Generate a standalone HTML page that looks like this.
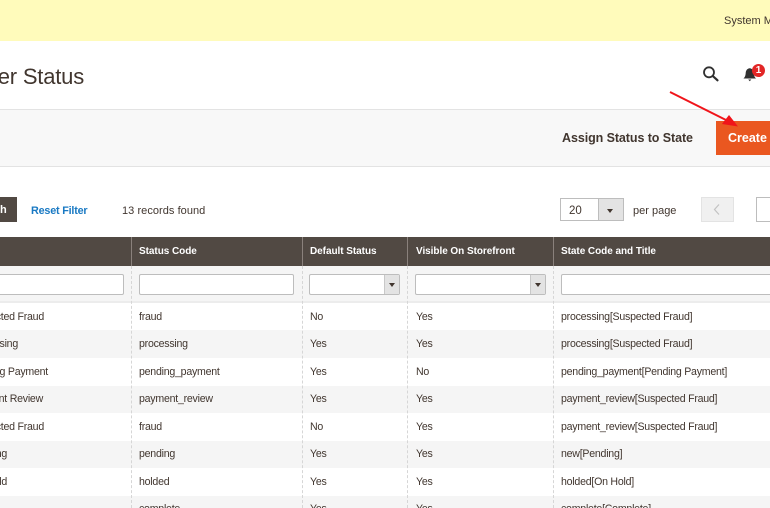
<!DOCTYPE html>
<html><head><meta charset="utf-8">
<style>
html,body{margin:0;padding:0;background:#fff}
#p{position:relative;width:770px;height:508px;overflow:hidden;background:#fff;font-family:"Liberation Sans",sans-serif;color:#41362f;font-size:11px}
#p div{position:absolute;white-space:nowrap}
.t{line-height:16px;margin-top:1px;font-size:10.6px;letter-spacing:-.24px}
.h{color:#fff;font-weight:bold;font-size:10px;line-height:16px;top:244px;letter-spacing:-.05px}
.r{left:0;width:770px;height:27.5px}
.g{background:#f5f5f5}
.sep{width:0;border-left:1px dashed #d6d6d6;top:266px;height:242px}
.hs{width:1px;background:#8a817c;top:237px;height:29px}
.in{background:#fff;border:1px solid #bdbdbd;border-radius:2px;height:19px;top:274px;box-sizing:content-box}
.sa{background:#e3e3e3;border-left:1px solid #c8c8c8;width:14px;height:19px;top:0;right:0}
.ar{width:0;height:0;border-left:3.5px solid transparent;border-right:3.5px solid transparent;border-top:4px solid #41362f}
</style></head><body>
<div id="p">
<div style="left:0;top:0;width:770px;height:41px;background:#fffbbb"></div>
<div class="t" style="left:724px;top:12px;font-size:11px;letter-spacing:0">System M</div>

<div style="right:686px;top:62px;font-size:22px;line-height:30px;color:#41362f;letter-spacing:-.2px">Order Status</div>

<svg style="position:absolute;left:700px;top:64px" width="22" height="20" viewBox="0 0 22 20"><circle cx="9" cy="8.300" r="5" fill="none" stroke="#303030" stroke-width="1.800"/><path d="M12.800 12L17.500 16.300" stroke="#303030" stroke-width="2.200" stroke-linecap="round"/></svg>
<svg style="position:absolute;left:742px;top:64px" width="16" height="18" viewBox="0 0 16 18"><path d="M1.500 14.500c1.600-1.600 2-3 2.200-5.500.2-2.800 1.700-4.600 4-4.800 2.400.2 3.900 2 4.100 4.800.2 2.500.6 3.900 2.200 5.500z" fill="#303030"/><path d="M6.200 15.500h3.100l-1.500 1.800z" fill="#303030"/></svg>
<div style="left:752px;top:64px;width:13px;height:13px;border-radius:50%;background:#e22626;color:#fff;font-weight:bold;font-size:10px;line-height:13px;text-align:center">1</div>

<div style="left:0;top:109px;width:770px;height:58px;background:#f8f8f8;border-top:1px solid #e3e3e3;border-bottom:1px solid #e3e3e3;box-sizing:border-box"></div>
<div style="left:562px;top:130px;font-size:12.500px;line-height:16px;font-weight:bold;color:#41362f;letter-spacing:-.08px">Assign Status to State</div>
<div style="left:716px;top:121px;width:60px;height:34px;background:#ea5720"></div>
<div style="left:728px;top:130px;font-size:12.500px;line-height:16px;font-weight:bold;color:#fff;letter-spacing:0">Create</div>

<svg style="position:absolute;left:660px;top:85px" width="90" height="50" viewBox="0 0 90 50"><path d="M10 7L68 36" stroke="#f0141a" stroke-width="2"/><path d="M78 41.500L62 39L69 30z" fill="#f0141a"/></svg>

<div style="left:-30px;top:197px;width:47px;height:25px;background:#514943"></div>
<div style="left:0;top:202px;font-weight:bold;font-size:11px;line-height:16px;color:#fff">h</div>
<div class="t" style="left:31px;top:202px;font-weight:bold;font-size:10.800px;color:#1979c3;letter-spacing:-.2px">Reset Filter</div>
<div class="t" style="left:122px;top:202px;font-size:11px;letter-spacing:.05px">13 records found</div>

<div style="left:560px;top:198px;width:63px;height:23px;border:1px solid #bdbdbd;box-sizing:border-box;background:#fff"></div>
<div style="left:598px;top:198px;width:26px;height:23px;background:#e3e3e3;border:1px solid #bdbdbd;box-sizing:border-box"></div>
<div class="ar" style="left:607px;top:209px"></div>
<div class="t" style="left:569px;top:202px;font-size:11.500px;letter-spacing:0">20</div>
<div class="t" style="left:633px;top:202px;font-size:11px;letter-spacing:0">per page</div>
<div style="left:701px;top:197px;width:33px;height:25px;background:#f0f0f0;border:1px solid #e3e3e3;box-sizing:border-box"></div>
<svg style="position:absolute;left:712px;top:203px" width="10" height="13" viewBox="0 0 10 13"><path d="M7 1.500L2.500 6.500L7 11.500" fill="none" stroke="#c2c2c2" stroke-width="1.200"/></svg>
<div style="left:756px;top:197px;width:30px;height:25px;background:#fff;border:1px solid #bdbdbd;box-sizing:border-box"></div>

<div style="left:0;top:237px;width:770px;height:29px;background:#514943"></div>
<div class="hs" style="left:131px"></div><div class="hs" style="left:302px"></div><div class="hs" style="left:407px"></div><div class="hs" style="left:553px"></div>
<div class="h" style="left:139px">Status Code</div>
<div class="h" style="left:310px">Default Status</div>
<div class="h" style="left:416px">Visible On Storefront</div>
<div class="h" style="left:561px">State Code and Title</div>

<div class="r g" style="top:266px;height:37px"></div>
<div class="r" style="top:301px;height:2px;background:#ececec"></div>
<div class="r" style="top:303px;background:#fff"></div>
<div class="r g" style="top:330px"></div>
<div class="r g" style="top:385.500px"></div>
<div class="r g" style="top:440.500px"></div>
<div class="r g" style="top:496px;height:12px"></div>

<div class="sep" style="left:131px"></div><div class="sep" style="left:302px"></div><div class="sep" style="left:407px"></div><div class="sep" style="left:553px"></div>

<div class="in" style="left:-10px;width:132px"></div>
<div class="in" style="left:139px;width:153px"></div>
<div class="in" style="left:309px;width:89px"><div class="sa"><div class="ar" style="left:3.500px;top:8px"></div></div></div>
<div class="in" style="left:415px;width:129px"><div class="sa"><div class="ar" style="left:3.500px;top:8px"></div></div></div>
<div class="in" style="left:561px;width:220px"></div>

<div class="t" style="right:726px;top:308px">Suspected Fraud</div><div class="t" style="left:139px;top:308px">fraud</div><div class="t" style="left:310px;top:308px">No</div><div class="t" style="left:416px;top:308px">Yes</div><div class="t" style="left:561px;top:308px">processing[Suspected Fraud]</div>
<div class="t" style="right:752px;top:335px">Processing</div><div class="t" style="left:139px;top:335px">processing</div><div class="t" style="left:310px;top:335px">Yes</div><div class="t" style="left:416px;top:335px">Yes</div><div class="t" style="left:561px;top:335px">processing[Suspected Fraud]</div>
<div class="t" style="right:722px;top:363px">Pending Payment</div><div class="t" style="left:139px;top:363px">pending_payment</div><div class="t" style="left:310px;top:363px">Yes</div><div class="t" style="left:416px;top:363px">No</div><div class="t" style="left:561px;top:363px">pending_payment[Pending Payment]</div>
<div class="t" style="right:727px;top:390px">Payment Review</div><div class="t" style="left:139px;top:390px">payment_review</div><div class="t" style="left:310px;top:390px">Yes</div><div class="t" style="left:416px;top:390px">Yes</div><div class="t" style="left:561px;top:390px">payment_review[Suspected Fraud]</div>
<div class="t" style="right:726px;top:418px">Suspected Fraud</div><div class="t" style="left:139px;top:418px">fraud</div><div class="t" style="left:310px;top:418px">No</div><div class="t" style="left:416px;top:418px">Yes</div><div class="t" style="left:561px;top:418px">payment_review[Suspected Fraud]</div>
<div class="t" style="right:763px;top:445px">Pending</div><div class="t" style="left:139px;top:445px">pending</div><div class="t" style="left:310px;top:445px">Yes</div><div class="t" style="left:416px;top:445px">Yes</div><div class="t" style="left:561px;top:445px">new[Pending]</div>
<div class="t" style="right:763px;top:473px">On Hold</div><div class="t" style="left:139px;top:473px">holded</div><div class="t" style="left:310px;top:473px">Yes</div><div class="t" style="left:416px;top:473px">Yes</div><div class="t" style="left:561px;top:473px">holded[On Hold]</div>
<div class="t" style="left:139px;top:500px">complete</div><div class="t" style="left:310px;top:500px">Yes</div><div class="t" style="left:416px;top:500px">Yes</div><div class="t" style="left:561px;top:500px">complete[Complete]</div>
</div>
</body></html>
